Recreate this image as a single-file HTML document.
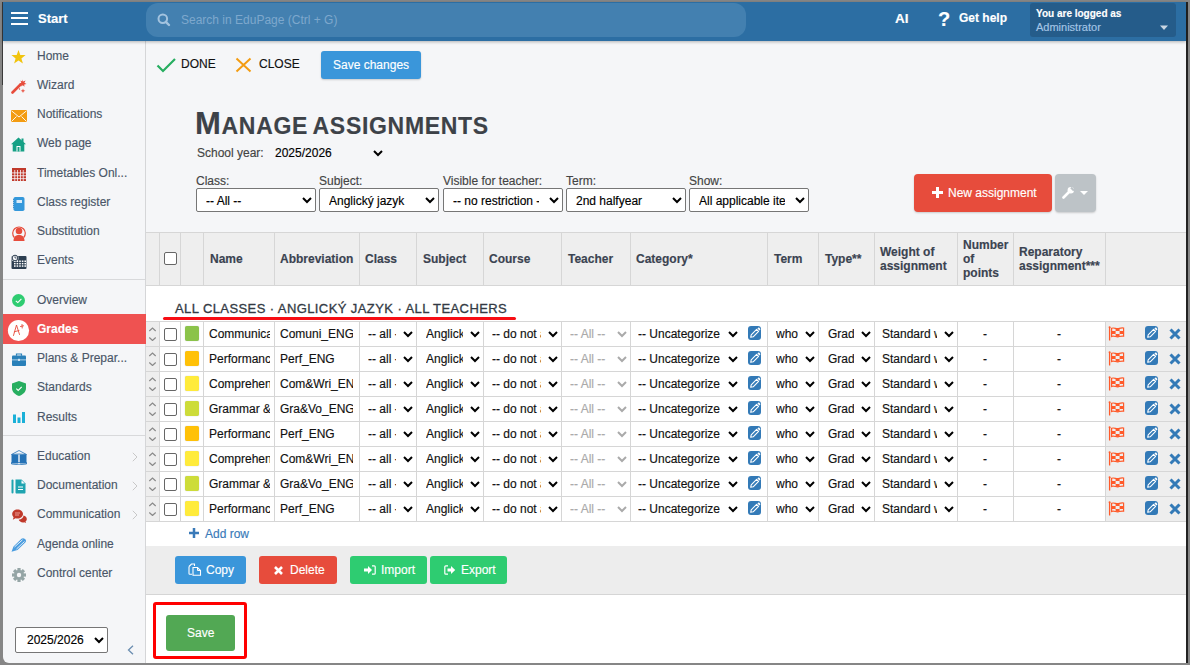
<!DOCTYPE html><html><head><meta charset="utf-8"><style>
*{box-sizing:border-box;margin:0;padding:0}
html,body{width:1190px;height:665px;overflow:hidden;background:#868686;font-family:"Liberation Sans",sans-serif;position:relative}
.a{position:absolute}
.t{position:absolute;white-space:nowrap;line-height:1;-webkit-text-stroke:0.15px currentColor}
.mi{font-size:12px;color:#4a5668;left:37px}
.hd{font-size:12px;font-weight:bold;color:#3b4351}
.c{font-size:12px;color:#111}
.clip{overflow:hidden;height:16px}
.vl{position:absolute;width:1px;background:#d6d6d6}
.hl{position:absolute;height:1px;background:#d6d6d6}
.btn{position:absolute;border-radius:3px;box-shadow:0 1px 2px rgba(0,0,0,.18)}
</style></head><body>
<div class="a" style="left:2px;top:2px;width:1px;height:83px;background:#3a3a3a"></div>
<div class="a" style="left:1186px;top:2px;width:2px;height:661px;background:#222"></div>
<div class="a" style="left:3px;top:2px;width:1183px;height:661px;background:#f5f6f8;border-bottom-left-radius:6px"></div>
<div class="a" style="left:3px;top:2px;width:1183px;height:39px;background:#2c6ea3;box-shadow:0 1px 3px rgba(0,0,0,.28);z-index:2"></div>
<div style="position:absolute;left:0;top:0;z-index:3">
<div class="a" style="left:11px;top:12px;width:17px;height:2px;background:#fff"></div>
<div class="a" style="left:11px;top:17px;width:17px;height:2px;background:#fff"></div>
<div class="a" style="left:11px;top:23px;width:17px;height:2px;background:#fff"></div>
<div class="t" style="left:38px;top:12px;font-size:13px;font-weight:bold;color:#fff">Start</div>
<div class="a" style="left:146px;top:3px;width:600px;height:34px;border-radius:12px;background:#4380b0"></div>
<svg class="a" style="left:157px;top:13px" width="14" height="14" viewBox="0 0 14 14"><circle cx="5.8" cy="5.8" r="4.3" fill="none" stroke="#a3c3df" stroke-width="2"/><line x1="8.8" y1="8.8" x2="12" y2="12" stroke="#a3c3df" stroke-width="2.4" stroke-linecap="round"/></svg>
<div class="t" style="left:181px;top:14px;font-size:12px;color:#7ea8cd;-webkit-text-stroke:0">Search in EduPage (Ctrl + G)</div>
<div class="t" style="left:895px;top:12px;font-size:13.5px;font-weight:bold;color:#fff">AI</div>
<div class="t" style="left:938px;top:8.5px;font-size:20px;font-weight:bold;color:#fff">?</div>
<div class="t" style="left:959px;top:12px;font-size:12px;font-weight:bold;color:#fff">Get help</div>
<div class="a" style="left:1030px;top:3px;width:146px;height:34px;border-radius:3px;background:#255c8a"></div>
<div class="t" style="left:1036px;top:9px;font-size:10px;font-weight:bold;color:#fff">You are logged as</div>
<div class="t" style="left:1036px;top:22px;font-size:11px;color:#a6c6e6">Administrator</div>
<svg class="a" style="left:1160px;top:25px" width="9" height="6"><path d="M0 0.5H8L4 5Z" fill="#c9d6e2"/></svg>
</div>
<div class="a" style="left:145px;top:41px;width:1px;height:622px;background:#d5d6d8"></div>
<div class="a" style="left:3px;top:279px;width:142px;height:1px;background:#d8d9db"></div>
<div class="a" style="left:3px;top:435px;width:142px;height:1px;background:#d8d9db"></div>
<div class="a" style="left:3px;top:314px;width:143px;height:30px;background:#ef5251"></div>
<div class="t mi" style="top:50px;">Home</div>
<div class="t mi" style="top:79px;">Wizard</div>
<div class="t mi" style="top:108px;">Notifications</div>
<div class="t mi" style="top:137px;">Web page</div>
<div class="t mi" style="top:167px;">Timetables Onl...</div>
<div class="t mi" style="top:196px;">Class register</div>
<div class="t mi" style="top:225px;">Substitution</div>
<div class="t mi" style="top:254px;">Events</div>
<div class="t mi" style="top:294px;">Overview</div>
<div class="t mi" style="top:323px;color:#fff;font-weight:bold">Grades</div>
<div class="t mi" style="top:352px;">Plans &amp; Prepar...</div>
<div class="t mi" style="top:381px;">Standards</div>
<div class="t mi" style="top:411px;">Results</div>
<div class="t mi" style="top:450px;">Education</div>
<div class="t mi" style="top:479px;">Documentation</div>
<div class="t mi" style="top:508px;">Communication</div>
<div class="t mi" style="top:538px;">Agenda online</div>
<div class="t mi" style="top:567px;">Control center</div>
<svg class="a" style="left:11px;top:50px" width="15" height="14" viewBox="0 0 15 14"><path d="M7.5 0L9.3 4.9L14.6 5.1L10.4 8.4L11.9 13.6L7.5 10.6L3.1 13.6L4.6 8.4L0.4 5.1L5.7 4.9Z" fill="#f1c40f"/></svg>
<svg class="a" style="left:11px;top:79px" width="16" height="15" viewBox="0 0 16 15"><path d="M1.5 13.5L9.5 5.5" stroke="#e74c3c" stroke-width="2.6" stroke-linecap="round"/><path d="M11.5 0.5L12.2 2.6L14.6 1.6L13.4 3.8L15.5 5L13.2 5.4L13.5 7.8L11.8 6.2L10.2 7.6L10.4 5.3L8.2 4.8L10.3 3.7L9.4 1.5L11.3 2.4Z" fill="#e74c3c"/><path d="M12 9.5L12.6 11.2L14.3 11.8L12.6 12.4L12 14L11.4 12.4L9.7 11.8L11.4 11.2Z" fill="#e74c3c"/><circle cx="8.5" cy="10" r="0.7" fill="#e74c3c"/></svg>
<svg class="a" style="left:11px;top:110px" width="16" height="12" viewBox="0 0 16 12"><rect x="0" y="0" width="16" height="12" fill="#f39c12"/><path d="M0.5 0.8L8 7L15.5 0.8M0.5 11.5L5.5 6.5M15.5 11.5L10.5 6.5" stroke="#fff" stroke-width="0.9" fill="none"/></svg>
<svg class="a" style="left:11px;top:137px" width="15" height="15" viewBox="0 0 15 15"><path d="M7.5 0.5L15 7.2H13.3V14.5H1.7V7.2H0Z" fill="#16a085"/><rect x="10.5" y="1.5" width="2" height="4" fill="#16a085"/><rect x="5.5" y="9" width="4" height="5.5" fill="#fff"/><rect x="6.5" y="10" width="2" height="4.5" fill="#16a085"/></svg>
<svg class="a" style="left:11.5px;top:168px" width="14" height="13" viewBox="0 0 14 13"><rect x="0" y="0" width="14" height="13" fill="#c0392b"/><rect x="2.4" y="2" width="0.8" height="11" fill="#f5f6f8"/><rect x="5.199999999999999" y="2" width="0.8" height="11" fill="#f5f6f8"/><rect x="7.999999999999998" y="2" width="0.8" height="11" fill="#f5f6f8"/><rect x="10.799999999999999" y="2" width="0.8" height="11" fill="#f5f6f8"/><rect x="0" y="4.5" width="14" height="0.8" fill="#f5f6f8"/><rect x="0" y="7.4" width="14" height="0.8" fill="#f5f6f8"/><rect x="0" y="10.299999999999999" width="14" height="0.8" fill="#f5f6f8"/></svg>
<svg class="a" style="left:13px;top:197px" width="12" height="14" viewBox="0 0 12 14"><rect x="0.5" y="0" width="11" height="14" rx="1.8" fill="#3498db"/><rect x="3.5" y="3" width="5.5" height="3" fill="#d8ecfa"/><path d="M0.5 2V12" stroke="#2a7fc0" stroke-width="0.8" stroke-dasharray="1 1"/></svg>
<svg class="a" style="left:11px;top:225px" width="16" height="16" viewBox="0 0 16 16"><path d="M3.3 12.5A6.3 6.3 0 1 1 12.7 12.5" fill="none" stroke="#e74c3c" stroke-width="1.2"/><circle cx="8" cy="6" r="3.3" fill="#e74c3c"/><path d="M2.5 16C2.5 11.5 5 10 8 10C11 10 13.5 11.5 13.5 16Z" fill="#e74c3c"/></svg>
<svg class="a" style="left:11px;top:254px" width="16" height="15" viewBox="0 0 16 15"><rect x="0.5" y="2" width="15" height="13" rx="1" fill="#2c3e50"/><g fill="#fff"><rect x="3.0" y="6.5" width="1.6" height="1.5"/><rect x="3.0" y="8.9" width="1.6" height="1.5"/><rect x="3.0" y="11.3" width="1.6" height="1.5"/><rect x="5.6" y="6.5" width="1.6" height="1.5"/><rect x="5.6" y="8.9" width="1.6" height="1.5"/><rect x="5.6" y="11.3" width="1.6" height="1.5"/><rect x="8.2" y="6.5" width="1.6" height="1.5"/><rect x="8.2" y="8.9" width="1.6" height="1.5"/><rect x="8.2" y="11.3" width="1.6" height="1.5"/><rect x="10.8" y="6.5" width="1.6" height="1.5"/><rect x="10.8" y="8.9" width="1.6" height="1.5"/><rect x="10.8" y="11.3" width="1.6" height="1.5"/><rect x="13.4" y="6.5" width="1.6" height="1.5"/><rect x="13.4" y="8.9" width="1.6" height="1.5"/><rect x="13.4" y="11.3" width="1.6" height="1.5"/></g><circle cx="4" cy="4" r="3.5" fill="#f5f6f8"/><circle cx="4" cy="4" r="2.8" fill="none" stroke="#2c3e50" stroke-width="1"/><path d="M4 2.3V4H5.5" stroke="#2c3e50" stroke-width="0.8" fill="none"/></svg>
<svg class="a" style="left:12px;top:294px" width="13" height="13" viewBox="0 0 13 13"><circle cx="6.5" cy="6.5" r="6.5" fill="#2ecc71"/><path d="M3.8 6.8L5.8 8.6L9.4 4.8" stroke="#fff" stroke-width="1.1" fill="none"/></svg>
<svg class="a" style="left:7px;top:319px" width="23" height="23" viewBox="0 0 23 23"><circle cx="11.5" cy="11.5" r="10.6" fill="#fff"/><path d="M6.5 16.5L9.5 6L12.5 15.5M7.3 12.8L12 11.5M13.5 7.5L16.5 6.8M15 5.5L15.2 9" stroke="#e74c3c" stroke-width="0.9" fill="none" stroke-linecap="round"/></svg>
<svg class="a" style="left:12px;top:353px" width="14" height="13" viewBox="0 0 14 13"><rect x="0" y="2.5" width="14" height="10.5" rx="1" fill="#2980b9"/><path d="M4.5 2.8V1H9.5V2.8" fill="none" stroke="#2980b9" stroke-width="1.2"/><rect x="0" y="6.5" width="14" height="0.8" fill="#cfe3f2"/><rect x="6" y="5.8" width="2" height="2.2" fill="#cfe3f2"/></svg>
<svg class="a" style="left:12px;top:381px" width="14" height="15" viewBox="0 0 14 15"><path d="M7 0L14 2.5V7C14 11 11 13.5 7 15C3 13.5 0 11 0 7V2.5Z" fill="#27ae60"/><path d="M4.3 7.6L6.2 9.4L9.7 5.8" stroke="#fff" stroke-width="1.1" fill="none"/></svg>
<svg class="a" style="left:13px;top:412px" width="12" height="11" viewBox="0 0 12 11"><rect x="0" y="2.5" width="3" height="8.5" fill="#1ab0d8"/><rect x="4.5" y="5.5" width="3" height="5.5" fill="#1ab0d8"/><rect x="9" y="0" width="3" height="11" fill="#1ab0d8"/></svg>
<svg class="a" style="left:11px;top:450px" width="16" height="15" viewBox="0 0 16 15"><path d="M8 0.5L15.5 4.5L8 4L0.5 4.5Z" fill="none" stroke="#2472b6" stroke-width="0.8"/><path d="M0.5 4.5H7.3V13.5H0.5Z M8.7 4.5H15.5V13.5H8.7Z" fill="#2472b6"/><path d="M0.5 12.5H15.5V14L8 14.8L0.5 14Z" fill="none" stroke="#2472b6" stroke-width="0.8"/></svg>
<svg class="a" style="left:11px;top:479px" width="15" height="15" viewBox="0 0 15 15"><rect x="0.5" y="0.5" width="2" height="14" rx="1" fill="#1fa4b0"/><path d="M4.5 0.5H10.5L14.5 4.5V13.5C14.5 14 14 14.5 13.5 14.5H5.5C5 14.5 4.5 14 4.5 13.5Z" fill="#1fa4b0"/><path d="M10.5 1.2V4.5H13.8" fill="#fff"/><path d="M7 8H12M7 10.5H12" stroke="#fff" stroke-width="1.1"/></svg>
<svg class="a" style="left:11.5px;top:509px" width="15" height="14" viewBox="0 0 15 14"><path d="M5.5 0.5C8.5 0.5 11 2.4 11 5C11 7.6 8.5 9.5 5.5 9.5C4.8 9.5 4.2 9.4 3.6 9.2L0.8 10.8L1.6 8.2C0.8 7.4 0.2 6.3 0.2 5C0.2 2.4 2.5 0.5 5.5 0.5Z" fill="#c0392b"/><path d="M11.5 6.5C13.5 7 14.8 8.3 14.8 10C14.8 11 14.3 11.9 13.5 12.5L14 14L12.2 13.2C11.8 13.3 11.4 13.4 11 13.4C8.8 13.4 7.2 12.3 6.7 10.8C9.5 10.3 11.5 8.6 11.5 6.5Z" fill="#c0392b"/><path d="M3 4H8M3 6H7" stroke="#f5b7b1" stroke-width="0.8"/></svg>
<svg class="a" style="left:11px;top:538px" width="16" height="14" viewBox="0 0 16 14"><path d="M0.5 13.8L2.5 8.5L10.5 0.8C11.3 0 12.8 0 14 1C15.2 2 15.3 3.5 14.5 4.3L6.5 12Z" fill="#4a9de0"/><path d="M3.5 9L11.5 1.8M5.5 11L13.5 3.5" stroke="#f5f6f8" stroke-width="0.9"/></svg>
<svg class="a" style="left:11.5px;top:567.5px" width="14" height="14" viewBox="0 0 14 14"><g transform="translate(7,7)" fill="#95a5a6"><rect x="-1.6" y="-7" width="3.2" height="4" transform="rotate(0)"/><rect x="-1.6" y="-7" width="3.2" height="4" transform="rotate(45)"/><rect x="-1.6" y="-7" width="3.2" height="4" transform="rotate(90)"/><rect x="-1.6" y="-7" width="3.2" height="4" transform="rotate(135)"/><rect x="-1.6" y="-7" width="3.2" height="4" transform="rotate(180)"/><rect x="-1.6" y="-7" width="3.2" height="4" transform="rotate(225)"/><rect x="-1.6" y="-7" width="3.2" height="4" transform="rotate(270)"/><rect x="-1.6" y="-7" width="3.2" height="4" transform="rotate(315)"/><circle r="5"/></g><circle cx="7" cy="7" r="2.2" fill="#f5f6f8"/></svg>
<svg class="a" style="left:132px;top:452px" width="6" height="10" viewBox="0 0 6 10"><path d="M0.8 0.8L5 5L0.8 9.2" stroke="#c8c8c8" stroke-width="1" fill="none"/></svg>
<svg class="a" style="left:132px;top:481px" width="6" height="10" viewBox="0 0 6 10"><path d="M0.8 0.8L5 5L0.8 9.2" stroke="#c8c8c8" stroke-width="1" fill="none"/></svg>
<svg class="a" style="left:132px;top:510px" width="6" height="10" viewBox="0 0 6 10"><path d="M0.8 0.8L5 5L0.8 9.2" stroke="#c8c8c8" stroke-width="1" fill="none"/></svg>
<svg class="a" style="left:127px;top:645px" width="7" height="10" viewBox="0 0 7 10"><path d="M6 0.8L1.5 5L6 9.2" stroke="#6a8db0" stroke-width="1.3" fill="none"/></svg>
<div class="a" style="left:15px;top:627px;width:93px;height:26px;border:1px solid #767676;border-radius:2px;background:#fff"></div>
<div class="t" style="left:27px;top:634px;font-size:12px;color:#000">2025/2026</div>
<svg class="a" style="left:94px;top:637px" width="10" height="7"><path d="M1 1L5.0 5L9 1" fill="none" stroke="#000" stroke-width="2"/></svg>
<svg class="a" style="left:156px;top:57px" width="20" height="16"><path d="M1.5 8.5L7 14L19 2" fill="none" stroke="#27ae60" stroke-width="2.2"/></svg>
<div class="t" style="left:181px;top:58px;font-size:12px;color:#111">DONE</div>
<svg class="a" style="left:235px;top:57px" width="17" height="16"><path d="M1.5 1.5L15.5 14.5M15.5 1.5L1.5 14.5" fill="none" stroke="#f39c12" stroke-width="2"/></svg>
<div class="t" style="left:259px;top:58px;font-size:12px;color:#111">CLOSE</div>
<div class="btn" style="left:321px;top:51px;width:100px;height:28px;background:#3a96da"></div>
<div class="t" style="left:333px;top:59px;font-size:12px;color:#fff">Save changes</div>
<div class="t" style="left:195px;top:108px;font-size:31px;font-weight:bold;color:#3d4248;letter-spacing:0.7px;word-spacing:-1.8px">M<span style="font-size:23px">ANAGE ASSIGNMENTS</span></div>
<div class="t" style="left:197px;top:147px;font-size:12px;color:#444">School year:</div>
<div class="t" style="left:275px;top:147px;font-size:12px;color:#000">2025/2026</div>
<svg class="a" style="left:373px;top:150px" width="10" height="7"><path d="M1 1L5.0 5L9 1" fill="none" stroke="#000" stroke-width="2"/></svg>
<div class="t" style="left:196px;top:175px;font-size:12px;color:#444">Class:</div>
<div class="a" style="left:196px;top:188px;width:120px;height:24px;border:1px solid #767676;border-radius:2px;background:#fff"></div>
<div class="t clip" style="left:206px;top:195px;width:86px;font-size:12px;color:#000">-- All --</div>
<svg class="a" style="left:302px;top:196.5px" width="10" height="7"><path d="M1 1L5.0 5L9 1" fill="none" stroke="#000" stroke-width="2"/></svg>
<div class="t" style="left:319px;top:175px;font-size:12px;color:#444">Subject:</div>
<div class="a" style="left:319px;top:188px;width:120px;height:24px;border:1px solid #767676;border-radius:2px;background:#fff"></div>
<div class="t clip" style="left:329px;top:195px;width:86px;font-size:12px;color:#000">Anglický jazyk</div>
<svg class="a" style="left:425px;top:196.5px" width="10" height="7"><path d="M1 1L5.0 5L9 1" fill="none" stroke="#000" stroke-width="2"/></svg>
<div class="t" style="left:443px;top:175px;font-size:12px;color:#444">Visible for teacher:</div>
<div class="a" style="left:443px;top:188px;width:120px;height:24px;border:1px solid #767676;border-radius:2px;background:#fff"></div>
<div class="t clip" style="left:453px;top:195px;width:86px;font-size:12px;color:#000">-- no restriction --</div>
<svg class="a" style="left:549px;top:196.5px" width="10" height="7"><path d="M1 1L5.0 5L9 1" fill="none" stroke="#000" stroke-width="2"/></svg>
<div class="t" style="left:566px;top:175px;font-size:12px;color:#444">Term:</div>
<div class="a" style="left:566px;top:188px;width:120px;height:24px;border:1px solid #767676;border-radius:2px;background:#fff"></div>
<div class="t clip" style="left:576px;top:195px;width:86px;font-size:12px;color:#000">2nd halfyear</div>
<svg class="a" style="left:672px;top:196.5px" width="10" height="7"><path d="M1 1L5.0 5L9 1" fill="none" stroke="#000" stroke-width="2"/></svg>
<div class="t" style="left:689px;top:175px;font-size:12px;color:#444">Show:</div>
<div class="a" style="left:689px;top:188px;width:120px;height:24px;border:1px solid #767676;border-radius:2px;background:#fff"></div>
<div class="t clip" style="left:699px;top:195px;width:86px;font-size:12px;color:#000">All applicable items</div>
<svg class="a" style="left:795px;top:196.5px" width="10" height="7"><path d="M1 1L5.0 5L9 1" fill="none" stroke="#000" stroke-width="2"/></svg>
<div class="btn" style="left:914px;top:174px;width:138px;height:38px;background:#e74c3c;border-radius:4px"></div>
<svg class="a" style="left:932px;top:187px" width="11" height="11"><path d="M5.5 0V11M0 5.5H11" stroke="#fff" stroke-width="3"/></svg>
<div class="t" style="left:948px;top:187px;font-size:12px;color:#fff">New assignment</div>
<div class="btn" style="left:1055px;top:174px;width:41px;height:38px;background:#bdc3c7;border-radius:4px"></div>
<svg class="a" style="left:1062px;top:186px" width="13" height="13" viewBox="0 0 13 13"><path d="M1.5 11.5L6.5 6.5" stroke="#fff" stroke-width="2.6" stroke-linecap="round"/><circle cx="8.8" cy="4.2" r="3.2" fill="#fff"/><path d="M9 1.5L12 4.5" stroke="#bdc3c7" stroke-width="2.2"/></svg>
<svg class="a" style="left:1080px;top:191px" width="9" height="5"><path d="M0 0H8L4 4Z" fill="#fff"/></svg>
<div class="a" style="left:146px;top:232px;width:1040px;height:54px;background:#eeeeee;border-top:1px solid #d6d6d6;border-bottom:1px solid #d6d6d6"></div>
<div class="a" style="left:146px;top:286px;width:1040px;height:260px;background:#fff"></div>
<div class="a" style="left:146px;top:321px;width:13px;height:200px;background:#eeeeee"></div>
<div class="a" style="left:1106px;top:321px;width:80px;height:200px;background:#eeeeee"></div>
<div class="vl" style="left:159px;top:232px;height:54px"></div>
<div class="vl" style="left:159px;top:321px;height:200px"></div>
<div class="vl" style="left:180px;top:232px;height:54px"></div>
<div class="vl" style="left:180px;top:321px;height:200px"></div>
<div class="vl" style="left:203px;top:232px;height:54px"></div>
<div class="vl" style="left:203px;top:321px;height:200px"></div>
<div class="vl" style="left:274px;top:232px;height:54px"></div>
<div class="vl" style="left:274px;top:321px;height:200px"></div>
<div class="vl" style="left:359px;top:232px;height:54px"></div>
<div class="vl" style="left:359px;top:321px;height:200px"></div>
<div class="vl" style="left:416px;top:232px;height:54px"></div>
<div class="vl" style="left:416px;top:321px;height:200px"></div>
<div class="vl" style="left:483px;top:232px;height:54px"></div>
<div class="vl" style="left:483px;top:321px;height:200px"></div>
<div class="vl" style="left:561px;top:232px;height:54px"></div>
<div class="vl" style="left:561px;top:321px;height:200px"></div>
<div class="vl" style="left:630px;top:232px;height:54px"></div>
<div class="vl" style="left:630px;top:321px;height:200px"></div>
<div class="vl" style="left:767px;top:232px;height:54px"></div>
<div class="vl" style="left:767px;top:321px;height:200px"></div>
<div class="vl" style="left:818px;top:232px;height:54px"></div>
<div class="vl" style="left:818px;top:321px;height:200px"></div>
<div class="vl" style="left:874px;top:232px;height:54px"></div>
<div class="vl" style="left:874px;top:321px;height:200px"></div>
<div class="vl" style="left:957px;top:232px;height:54px"></div>
<div class="vl" style="left:957px;top:321px;height:200px"></div>
<div class="vl" style="left:1013px;top:232px;height:54px"></div>
<div class="vl" style="left:1013px;top:321px;height:200px"></div>
<div class="vl" style="left:1105px;top:232px;height:54px"></div>
<div class="vl" style="left:1105px;top:321px;height:200px"></div>
<div class="hl" style="left:146px;top:321px;width:1040px"></div>
<div class="hl" style="left:146px;top:346px;width:1040px"></div>
<div class="hl" style="left:146px;top:371px;width:1040px"></div>
<div class="hl" style="left:146px;top:396px;width:1040px"></div>
<div class="hl" style="left:146px;top:421px;width:1040px"></div>
<div class="hl" style="left:146px;top:446px;width:1040px"></div>
<div class="hl" style="left:146px;top:471px;width:1040px"></div>
<div class="hl" style="left:146px;top:496px;width:1040px"></div>
<div class="hl" style="left:146px;top:521px;width:1040px"></div>
<div class="a" style="left:164px;top:252px;width:13px;height:13px;border:1.5px solid #666;border-radius:2px;background:#fff"></div>
<div class="t hd" style="left:210px;top:253px">Name</div>
<div class="t hd" style="left:280px;top:253px">Abbreviation</div>
<div class="t hd" style="left:365px;top:253px">Class</div>
<div class="t hd" style="left:423px;top:253px">Subject</div>
<div class="t hd" style="left:489px;top:253px">Course</div>
<div class="t hd" style="left:568px;top:253px">Teacher</div>
<div class="t hd" style="left:636px;top:253px">Category*</div>
<div class="t hd" style="left:774px;top:253px">Term</div>
<div class="t hd" style="left:825px;top:253px">Type**</div>
<div class="t hd" style="left:880px;top:245px;line-height:14px">Weight of<br>assignment</div>
<div class="t hd" style="left:963px;top:238px;line-height:14px">Number<br>of<br>points</div>
<div class="t hd" style="left:1019px;top:245px;line-height:14px">Reparatory<br>assignment***</div>
<div class="t" style="left:175px;top:302px;font-size:13px;color:#333a44;letter-spacing:0.41px;-webkit-text-stroke:0.3px #333a44">ALL CLASSES · ANGLICKÝ JAZYK · ALL TEACHERS</div>
<div class="a" style="left:163px;top:317px;width:353px;height:3px;border-radius:2px;background:#f70d14"></div>
<svg class="a" style="left:148px;top:327px" width="9" height="14"><path d="M1.3 4L4.5 1L7.7 4M1.3 10.5L4.5 13.5L7.7 10.5" fill="none" stroke="#8a8a8a" stroke-width="1.2"/></svg>
<div class="a" style="left:164px;top:328px;width:13px;height:13px;border:1.5px solid #666;border-radius:2px;background:#fff"></div>
<div class="a" style="left:185px;top:326px;width:14px;height:15px;border-radius:2px;background:#8bc34a;box-shadow:0 0 1px rgba(0,0,0,.3)"></div>
<div class="t c clip" style="left:209px;top:328px;width:61px">Communica</div>
<div class="t c clip" style="left:280px;top:328px;width:73px">Comuni_ENG</div>
<div class="t c clip" style="left:368px;top:328px;width:28px">-- all --</div>
<svg class="a" style="left:403px;top:331px" width="10" height="7"><path d="M1 1L5.0 5L9 1" fill="none" stroke="#000" stroke-width="2"/></svg>
<div class="t c clip" style="left:426px;top:328px;width:37px">Anglický</div>
<svg class="a" style="left:470px;top:331px" width="10" height="7"><path d="M1 1L5.0 5L9 1" fill="none" stroke="#000" stroke-width="2"/></svg>
<div class="t c clip" style="left:492px;top:328px;width:49px">-- do not assign --</div>
<svg class="a" style="left:548px;top:331px" width="10" height="7"><path d="M1 1L5.0 5L9 1" fill="none" stroke="#000" stroke-width="2"/></svg>
<div class="t c clip" style="left:570px;top:328px;width:44px;color:#aaa">-- All --</div>
<svg class="a" style="left:617px;top:331px" width="10" height="7"><path d="M1 1L5.0 5L9 1" fill="none" stroke="#aaa" stroke-width="2"/></svg>
<div class="t c clip" style="left:638px;top:328px;width:82px">-- Uncategorized --</div>
<svg class="a" style="left:728px;top:331px" width="10" height="7"><path d="M1 1L5.0 5L9 1" fill="none" stroke="#000" stroke-width="2"/></svg>
<div class="a" style="left:748px;top:326px;width:13px;height:14px;border-radius:3px;background:#337ab7"></div>
<svg class="a" style="left:748px;top:326px" width="14" height="14"><path d="M2.7 11.3L3.2 8.8L8.6 3.4L10.6 5.4L5.2 10.8Z" fill="none" stroke="#fff" stroke-width="1.1" stroke-linejoin="round"/><path d="M9.4 2.6L10.2 1.8C10.5 1.5 11 1.5 11.3 1.8L12.2 2.7C12.5 3 12.5 3.5 12.2 3.8L11.4 4.6Z" fill="#fff"/></svg>
<div class="t c clip" style="left:776px;top:328px;width:22px">whole year</div>
<svg class="a" style="left:805px;top:331px" width="10" height="7"><path d="M1 1L5.0 5L9 1" fill="none" stroke="#000" stroke-width="2"/></svg>
<div class="t c clip" style="left:828px;top:328px;width:26px">Grades</div>
<svg class="a" style="left:861px;top:331px" width="10" height="7"><path d="M1 1L5.0 5L9 1" fill="none" stroke="#000" stroke-width="2"/></svg>
<div class="t c clip" style="left:882px;top:328px;width:55px">Standard weight</div>
<svg class="a" style="left:944px;top:331px" width="10" height="7"><path d="M1 1L5.0 5L9 1" fill="none" stroke="#000" stroke-width="2"/></svg>
<div class="t c" style="left:983px;top:328px">-</div>
<div class="t c" style="left:1057px;top:328px">-</div>
<svg class="a" style="left:1108px;top:326px" width="17" height="15" viewBox="0 0 17 15"><path d="M1.6 1V14.5" stroke="#ff5a2a" stroke-width="1.3"/><circle cx="1.6" cy="1.2" r="1" fill="#ff5a2a"/><path d="M3.6 2.3C6 1.3 8 3 10 2.6C12 2.2 13.5 1.6 15.6 2V10.2C13.5 9.8 12 10.4 10 10.8C8 11.2 6 9.5 3.6 10.5Z" fill="none" stroke="#ff5a2a" stroke-width="1.2"/><path d="M7.6 2.3H11.6V5.1H7.6Z M3.6 5.1H7.6V7.9H3.6Z M11.6 5.1H15.6V7.9H11.6Z M7.6 7.9H11.6V10.7H7.6Z" fill="#ff5a2a"/></svg>
<div class="a" style="left:1145px;top:326px;width:13px;height:14px;border-radius:3px;background:#337ab7"></div>
<svg class="a" style="left:1145px;top:326px" width="14" height="14"><path d="M2.7 11.3L3.2 8.8L8.6 3.4L10.6 5.4L5.2 10.8Z" fill="none" stroke="#fff" stroke-width="1.1" stroke-linejoin="round"/><path d="M9.4 2.6L10.2 1.8C10.5 1.5 11 1.5 11.3 1.8L12.2 2.7C12.5 3 12.5 3.5 12.2 3.8L11.4 4.6Z" fill="#fff"/></svg>
<svg class="a" style="left:1169px;top:328px" width="12" height="12"><path d="M1.5 1.5L10.5 10.5M10.5 1.5L1.5 10.5" stroke="#337ab7" stroke-width="3"/></svg>
<svg class="a" style="left:148px;top:352px" width="9" height="14"><path d="M1.3 4L4.5 1L7.7 4M1.3 10.5L4.5 13.5L7.7 10.5" fill="none" stroke="#8a8a8a" stroke-width="1.2"/></svg>
<div class="a" style="left:164px;top:353px;width:13px;height:13px;border:1.5px solid #666;border-radius:2px;background:#fff"></div>
<div class="a" style="left:185px;top:351px;width:14px;height:15px;border-radius:2px;background:#ffc107;box-shadow:0 0 1px rgba(0,0,0,.3)"></div>
<div class="t c clip" style="left:209px;top:353px;width:61px">Performanc</div>
<div class="t c clip" style="left:280px;top:353px;width:73px">Perf_ENG</div>
<div class="t c clip" style="left:368px;top:353px;width:28px">-- all --</div>
<svg class="a" style="left:403px;top:356px" width="10" height="7"><path d="M1 1L5.0 5L9 1" fill="none" stroke="#000" stroke-width="2"/></svg>
<div class="t c clip" style="left:426px;top:353px;width:37px">Anglický</div>
<svg class="a" style="left:470px;top:356px" width="10" height="7"><path d="M1 1L5.0 5L9 1" fill="none" stroke="#000" stroke-width="2"/></svg>
<div class="t c clip" style="left:492px;top:353px;width:49px">-- do not assign --</div>
<svg class="a" style="left:548px;top:356px" width="10" height="7"><path d="M1 1L5.0 5L9 1" fill="none" stroke="#000" stroke-width="2"/></svg>
<div class="t c clip" style="left:570px;top:353px;width:44px;color:#aaa">-- All --</div>
<svg class="a" style="left:617px;top:356px" width="10" height="7"><path d="M1 1L5.0 5L9 1" fill="none" stroke="#aaa" stroke-width="2"/></svg>
<div class="t c clip" style="left:638px;top:353px;width:82px">-- Uncategorized --</div>
<svg class="a" style="left:728px;top:356px" width="10" height="7"><path d="M1 1L5.0 5L9 1" fill="none" stroke="#000" stroke-width="2"/></svg>
<div class="a" style="left:748px;top:351px;width:13px;height:14px;border-radius:3px;background:#337ab7"></div>
<svg class="a" style="left:748px;top:351px" width="14" height="14"><path d="M2.7 11.3L3.2 8.8L8.6 3.4L10.6 5.4L5.2 10.8Z" fill="none" stroke="#fff" stroke-width="1.1" stroke-linejoin="round"/><path d="M9.4 2.6L10.2 1.8C10.5 1.5 11 1.5 11.3 1.8L12.2 2.7C12.5 3 12.5 3.5 12.2 3.8L11.4 4.6Z" fill="#fff"/></svg>
<div class="t c clip" style="left:776px;top:353px;width:22px">whole year</div>
<svg class="a" style="left:805px;top:356px" width="10" height="7"><path d="M1 1L5.0 5L9 1" fill="none" stroke="#000" stroke-width="2"/></svg>
<div class="t c clip" style="left:828px;top:353px;width:26px">Grades</div>
<svg class="a" style="left:861px;top:356px" width="10" height="7"><path d="M1 1L5.0 5L9 1" fill="none" stroke="#000" stroke-width="2"/></svg>
<div class="t c clip" style="left:882px;top:353px;width:55px">Standard weight</div>
<svg class="a" style="left:944px;top:356px" width="10" height="7"><path d="M1 1L5.0 5L9 1" fill="none" stroke="#000" stroke-width="2"/></svg>
<div class="t c" style="left:983px;top:353px">-</div>
<div class="t c" style="left:1057px;top:353px">-</div>
<svg class="a" style="left:1108px;top:351px" width="17" height="15" viewBox="0 0 17 15"><path d="M1.6 1V14.5" stroke="#ff5a2a" stroke-width="1.3"/><circle cx="1.6" cy="1.2" r="1" fill="#ff5a2a"/><path d="M3.6 2.3C6 1.3 8 3 10 2.6C12 2.2 13.5 1.6 15.6 2V10.2C13.5 9.8 12 10.4 10 10.8C8 11.2 6 9.5 3.6 10.5Z" fill="none" stroke="#ff5a2a" stroke-width="1.2"/><path d="M7.6 2.3H11.6V5.1H7.6Z M3.6 5.1H7.6V7.9H3.6Z M11.6 5.1H15.6V7.9H11.6Z M7.6 7.9H11.6V10.7H7.6Z" fill="#ff5a2a"/></svg>
<div class="a" style="left:1145px;top:351px;width:13px;height:14px;border-radius:3px;background:#337ab7"></div>
<svg class="a" style="left:1145px;top:351px" width="14" height="14"><path d="M2.7 11.3L3.2 8.8L8.6 3.4L10.6 5.4L5.2 10.8Z" fill="none" stroke="#fff" stroke-width="1.1" stroke-linejoin="round"/><path d="M9.4 2.6L10.2 1.8C10.5 1.5 11 1.5 11.3 1.8L12.2 2.7C12.5 3 12.5 3.5 12.2 3.8L11.4 4.6Z" fill="#fff"/></svg>
<svg class="a" style="left:1169px;top:353px" width="12" height="12"><path d="M1.5 1.5L10.5 10.5M10.5 1.5L1.5 10.5" stroke="#337ab7" stroke-width="3"/></svg>
<svg class="a" style="left:148px;top:377px" width="9" height="14"><path d="M1.3 4L4.5 1L7.7 4M1.3 10.5L4.5 13.5L7.7 10.5" fill="none" stroke="#8a8a8a" stroke-width="1.2"/></svg>
<div class="a" style="left:164px;top:378px;width:13px;height:13px;border:1.5px solid #666;border-radius:2px;background:#fff"></div>
<div class="a" style="left:185px;top:376px;width:14px;height:15px;border-radius:2px;background:#ffeb3b;box-shadow:0 0 1px rgba(0,0,0,.3)"></div>
<div class="t c clip" style="left:209px;top:378px;width:61px">Comprehen</div>
<div class="t c clip" style="left:280px;top:378px;width:73px">Com&amp;Wri_EN</div>
<div class="t c clip" style="left:368px;top:378px;width:28px">-- all --</div>
<svg class="a" style="left:403px;top:381px" width="10" height="7"><path d="M1 1L5.0 5L9 1" fill="none" stroke="#000" stroke-width="2"/></svg>
<div class="t c clip" style="left:426px;top:378px;width:37px">Anglický</div>
<svg class="a" style="left:470px;top:381px" width="10" height="7"><path d="M1 1L5.0 5L9 1" fill="none" stroke="#000" stroke-width="2"/></svg>
<div class="t c clip" style="left:492px;top:378px;width:49px">-- do not assign --</div>
<svg class="a" style="left:548px;top:381px" width="10" height="7"><path d="M1 1L5.0 5L9 1" fill="none" stroke="#000" stroke-width="2"/></svg>
<div class="t c clip" style="left:570px;top:378px;width:44px;color:#aaa">-- All --</div>
<svg class="a" style="left:617px;top:381px" width="10" height="7"><path d="M1 1L5.0 5L9 1" fill="none" stroke="#aaa" stroke-width="2"/></svg>
<div class="t c clip" style="left:638px;top:378px;width:82px">-- Uncategorized --</div>
<svg class="a" style="left:728px;top:381px" width="10" height="7"><path d="M1 1L5.0 5L9 1" fill="none" stroke="#000" stroke-width="2"/></svg>
<div class="a" style="left:748px;top:376px;width:13px;height:14px;border-radius:3px;background:#337ab7"></div>
<svg class="a" style="left:748px;top:376px" width="14" height="14"><path d="M2.7 11.3L3.2 8.8L8.6 3.4L10.6 5.4L5.2 10.8Z" fill="none" stroke="#fff" stroke-width="1.1" stroke-linejoin="round"/><path d="M9.4 2.6L10.2 1.8C10.5 1.5 11 1.5 11.3 1.8L12.2 2.7C12.5 3 12.5 3.5 12.2 3.8L11.4 4.6Z" fill="#fff"/></svg>
<div class="t c clip" style="left:776px;top:378px;width:22px">whole year</div>
<svg class="a" style="left:805px;top:381px" width="10" height="7"><path d="M1 1L5.0 5L9 1" fill="none" stroke="#000" stroke-width="2"/></svg>
<div class="t c clip" style="left:828px;top:378px;width:26px">Grades</div>
<svg class="a" style="left:861px;top:381px" width="10" height="7"><path d="M1 1L5.0 5L9 1" fill="none" stroke="#000" stroke-width="2"/></svg>
<div class="t c clip" style="left:882px;top:378px;width:55px">Standard weight</div>
<svg class="a" style="left:944px;top:381px" width="10" height="7"><path d="M1 1L5.0 5L9 1" fill="none" stroke="#000" stroke-width="2"/></svg>
<div class="t c" style="left:983px;top:378px">-</div>
<div class="t c" style="left:1057px;top:378px">-</div>
<svg class="a" style="left:1108px;top:376px" width="17" height="15" viewBox="0 0 17 15"><path d="M1.6 1V14.5" stroke="#ff5a2a" stroke-width="1.3"/><circle cx="1.6" cy="1.2" r="1" fill="#ff5a2a"/><path d="M3.6 2.3C6 1.3 8 3 10 2.6C12 2.2 13.5 1.6 15.6 2V10.2C13.5 9.8 12 10.4 10 10.8C8 11.2 6 9.5 3.6 10.5Z" fill="none" stroke="#ff5a2a" stroke-width="1.2"/><path d="M7.6 2.3H11.6V5.1H7.6Z M3.6 5.1H7.6V7.9H3.6Z M11.6 5.1H15.6V7.9H11.6Z M7.6 7.9H11.6V10.7H7.6Z" fill="#ff5a2a"/></svg>
<div class="a" style="left:1145px;top:376px;width:13px;height:14px;border-radius:3px;background:#337ab7"></div>
<svg class="a" style="left:1145px;top:376px" width="14" height="14"><path d="M2.7 11.3L3.2 8.8L8.6 3.4L10.6 5.4L5.2 10.8Z" fill="none" stroke="#fff" stroke-width="1.1" stroke-linejoin="round"/><path d="M9.4 2.6L10.2 1.8C10.5 1.5 11 1.5 11.3 1.8L12.2 2.7C12.5 3 12.5 3.5 12.2 3.8L11.4 4.6Z" fill="#fff"/></svg>
<svg class="a" style="left:1169px;top:378px" width="12" height="12"><path d="M1.5 1.5L10.5 10.5M10.5 1.5L1.5 10.5" stroke="#337ab7" stroke-width="3"/></svg>
<svg class="a" style="left:148px;top:402px" width="9" height="14"><path d="M1.3 4L4.5 1L7.7 4M1.3 10.5L4.5 13.5L7.7 10.5" fill="none" stroke="#8a8a8a" stroke-width="1.2"/></svg>
<div class="a" style="left:164px;top:403px;width:13px;height:13px;border:1.5px solid #666;border-radius:2px;background:#fff"></div>
<div class="a" style="left:185px;top:401px;width:14px;height:15px;border-radius:2px;background:#cddc39;box-shadow:0 0 1px rgba(0,0,0,.3)"></div>
<div class="t c clip" style="left:209px;top:403px;width:61px">Grammar &amp;</div>
<div class="t c clip" style="left:280px;top:403px;width:73px">Gra&amp;Vo_ENG</div>
<div class="t c clip" style="left:368px;top:403px;width:28px">-- all --</div>
<svg class="a" style="left:403px;top:406px" width="10" height="7"><path d="M1 1L5.0 5L9 1" fill="none" stroke="#000" stroke-width="2"/></svg>
<div class="t c clip" style="left:426px;top:403px;width:37px">Anglický</div>
<svg class="a" style="left:470px;top:406px" width="10" height="7"><path d="M1 1L5.0 5L9 1" fill="none" stroke="#000" stroke-width="2"/></svg>
<div class="t c clip" style="left:492px;top:403px;width:49px">-- do not assign --</div>
<svg class="a" style="left:548px;top:406px" width="10" height="7"><path d="M1 1L5.0 5L9 1" fill="none" stroke="#000" stroke-width="2"/></svg>
<div class="t c clip" style="left:570px;top:403px;width:44px;color:#aaa">-- All --</div>
<svg class="a" style="left:617px;top:406px" width="10" height="7"><path d="M1 1L5.0 5L9 1" fill="none" stroke="#aaa" stroke-width="2"/></svg>
<div class="t c clip" style="left:638px;top:403px;width:82px">-- Uncategorized --</div>
<svg class="a" style="left:728px;top:406px" width="10" height="7"><path d="M1 1L5.0 5L9 1" fill="none" stroke="#000" stroke-width="2"/></svg>
<div class="a" style="left:748px;top:401px;width:13px;height:14px;border-radius:3px;background:#337ab7"></div>
<svg class="a" style="left:748px;top:401px" width="14" height="14"><path d="M2.7 11.3L3.2 8.8L8.6 3.4L10.6 5.4L5.2 10.8Z" fill="none" stroke="#fff" stroke-width="1.1" stroke-linejoin="round"/><path d="M9.4 2.6L10.2 1.8C10.5 1.5 11 1.5 11.3 1.8L12.2 2.7C12.5 3 12.5 3.5 12.2 3.8L11.4 4.6Z" fill="#fff"/></svg>
<div class="t c clip" style="left:776px;top:403px;width:22px">whole year</div>
<svg class="a" style="left:805px;top:406px" width="10" height="7"><path d="M1 1L5.0 5L9 1" fill="none" stroke="#000" stroke-width="2"/></svg>
<div class="t c clip" style="left:828px;top:403px;width:26px">Grades</div>
<svg class="a" style="left:861px;top:406px" width="10" height="7"><path d="M1 1L5.0 5L9 1" fill="none" stroke="#000" stroke-width="2"/></svg>
<div class="t c clip" style="left:882px;top:403px;width:55px">Standard weight</div>
<svg class="a" style="left:944px;top:406px" width="10" height="7"><path d="M1 1L5.0 5L9 1" fill="none" stroke="#000" stroke-width="2"/></svg>
<div class="t c" style="left:983px;top:403px">-</div>
<div class="t c" style="left:1057px;top:403px">-</div>
<svg class="a" style="left:1108px;top:401px" width="17" height="15" viewBox="0 0 17 15"><path d="M1.6 1V14.5" stroke="#ff5a2a" stroke-width="1.3"/><circle cx="1.6" cy="1.2" r="1" fill="#ff5a2a"/><path d="M3.6 2.3C6 1.3 8 3 10 2.6C12 2.2 13.5 1.6 15.6 2V10.2C13.5 9.8 12 10.4 10 10.8C8 11.2 6 9.5 3.6 10.5Z" fill="none" stroke="#ff5a2a" stroke-width="1.2"/><path d="M7.6 2.3H11.6V5.1H7.6Z M3.6 5.1H7.6V7.9H3.6Z M11.6 5.1H15.6V7.9H11.6Z M7.6 7.9H11.6V10.7H7.6Z" fill="#ff5a2a"/></svg>
<div class="a" style="left:1145px;top:401px;width:13px;height:14px;border-radius:3px;background:#337ab7"></div>
<svg class="a" style="left:1145px;top:401px" width="14" height="14"><path d="M2.7 11.3L3.2 8.8L8.6 3.4L10.6 5.4L5.2 10.8Z" fill="none" stroke="#fff" stroke-width="1.1" stroke-linejoin="round"/><path d="M9.4 2.6L10.2 1.8C10.5 1.5 11 1.5 11.3 1.8L12.2 2.7C12.5 3 12.5 3.5 12.2 3.8L11.4 4.6Z" fill="#fff"/></svg>
<svg class="a" style="left:1169px;top:403px" width="12" height="12"><path d="M1.5 1.5L10.5 10.5M10.5 1.5L1.5 10.5" stroke="#337ab7" stroke-width="3"/></svg>
<svg class="a" style="left:148px;top:427px" width="9" height="14"><path d="M1.3 4L4.5 1L7.7 4M1.3 10.5L4.5 13.5L7.7 10.5" fill="none" stroke="#8a8a8a" stroke-width="1.2"/></svg>
<div class="a" style="left:164px;top:428px;width:13px;height:13px;border:1.5px solid #666;border-radius:2px;background:#fff"></div>
<div class="a" style="left:185px;top:426px;width:14px;height:15px;border-radius:2px;background:#ffc107;box-shadow:0 0 1px rgba(0,0,0,.3)"></div>
<div class="t c clip" style="left:209px;top:428px;width:61px">Performanc</div>
<div class="t c clip" style="left:280px;top:428px;width:73px">Perf_ENG</div>
<div class="t c clip" style="left:368px;top:428px;width:28px">-- all --</div>
<svg class="a" style="left:403px;top:431px" width="10" height="7"><path d="M1 1L5.0 5L9 1" fill="none" stroke="#000" stroke-width="2"/></svg>
<div class="t c clip" style="left:426px;top:428px;width:37px">Anglický</div>
<svg class="a" style="left:470px;top:431px" width="10" height="7"><path d="M1 1L5.0 5L9 1" fill="none" stroke="#000" stroke-width="2"/></svg>
<div class="t c clip" style="left:492px;top:428px;width:49px">-- do not assign --</div>
<svg class="a" style="left:548px;top:431px" width="10" height="7"><path d="M1 1L5.0 5L9 1" fill="none" stroke="#000" stroke-width="2"/></svg>
<div class="t c clip" style="left:570px;top:428px;width:44px;color:#aaa">-- All --</div>
<svg class="a" style="left:617px;top:431px" width="10" height="7"><path d="M1 1L5.0 5L9 1" fill="none" stroke="#aaa" stroke-width="2"/></svg>
<div class="t c clip" style="left:638px;top:428px;width:82px">-- Uncategorized --</div>
<svg class="a" style="left:728px;top:431px" width="10" height="7"><path d="M1 1L5.0 5L9 1" fill="none" stroke="#000" stroke-width="2"/></svg>
<div class="a" style="left:748px;top:426px;width:13px;height:14px;border-radius:3px;background:#337ab7"></div>
<svg class="a" style="left:748px;top:426px" width="14" height="14"><path d="M2.7 11.3L3.2 8.8L8.6 3.4L10.6 5.4L5.2 10.8Z" fill="none" stroke="#fff" stroke-width="1.1" stroke-linejoin="round"/><path d="M9.4 2.6L10.2 1.8C10.5 1.5 11 1.5 11.3 1.8L12.2 2.7C12.5 3 12.5 3.5 12.2 3.8L11.4 4.6Z" fill="#fff"/></svg>
<div class="t c clip" style="left:776px;top:428px;width:22px">whole year</div>
<svg class="a" style="left:805px;top:431px" width="10" height="7"><path d="M1 1L5.0 5L9 1" fill="none" stroke="#000" stroke-width="2"/></svg>
<div class="t c clip" style="left:828px;top:428px;width:26px">Grades</div>
<svg class="a" style="left:861px;top:431px" width="10" height="7"><path d="M1 1L5.0 5L9 1" fill="none" stroke="#000" stroke-width="2"/></svg>
<div class="t c clip" style="left:882px;top:428px;width:55px">Standard weight</div>
<svg class="a" style="left:944px;top:431px" width="10" height="7"><path d="M1 1L5.0 5L9 1" fill="none" stroke="#000" stroke-width="2"/></svg>
<div class="t c" style="left:983px;top:428px">-</div>
<div class="t c" style="left:1057px;top:428px">-</div>
<svg class="a" style="left:1108px;top:426px" width="17" height="15" viewBox="0 0 17 15"><path d="M1.6 1V14.5" stroke="#ff5a2a" stroke-width="1.3"/><circle cx="1.6" cy="1.2" r="1" fill="#ff5a2a"/><path d="M3.6 2.3C6 1.3 8 3 10 2.6C12 2.2 13.5 1.6 15.6 2V10.2C13.5 9.8 12 10.4 10 10.8C8 11.2 6 9.5 3.6 10.5Z" fill="none" stroke="#ff5a2a" stroke-width="1.2"/><path d="M7.6 2.3H11.6V5.1H7.6Z M3.6 5.1H7.6V7.9H3.6Z M11.6 5.1H15.6V7.9H11.6Z M7.6 7.9H11.6V10.7H7.6Z" fill="#ff5a2a"/></svg>
<div class="a" style="left:1145px;top:426px;width:13px;height:14px;border-radius:3px;background:#337ab7"></div>
<svg class="a" style="left:1145px;top:426px" width="14" height="14"><path d="M2.7 11.3L3.2 8.8L8.6 3.4L10.6 5.4L5.2 10.8Z" fill="none" stroke="#fff" stroke-width="1.1" stroke-linejoin="round"/><path d="M9.4 2.6L10.2 1.8C10.5 1.5 11 1.5 11.3 1.8L12.2 2.7C12.5 3 12.5 3.5 12.2 3.8L11.4 4.6Z" fill="#fff"/></svg>
<svg class="a" style="left:1169px;top:428px" width="12" height="12"><path d="M1.5 1.5L10.5 10.5M10.5 1.5L1.5 10.5" stroke="#337ab7" stroke-width="3"/></svg>
<svg class="a" style="left:148px;top:452px" width="9" height="14"><path d="M1.3 4L4.5 1L7.7 4M1.3 10.5L4.5 13.5L7.7 10.5" fill="none" stroke="#8a8a8a" stroke-width="1.2"/></svg>
<div class="a" style="left:164px;top:453px;width:13px;height:13px;border:1.5px solid #666;border-radius:2px;background:#fff"></div>
<div class="a" style="left:185px;top:451px;width:14px;height:15px;border-radius:2px;background:#ffeb3b;box-shadow:0 0 1px rgba(0,0,0,.3)"></div>
<div class="t c clip" style="left:209px;top:453px;width:61px">Comprehen</div>
<div class="t c clip" style="left:280px;top:453px;width:73px">Com&amp;Wri_EN</div>
<div class="t c clip" style="left:368px;top:453px;width:28px">-- all --</div>
<svg class="a" style="left:403px;top:456px" width="10" height="7"><path d="M1 1L5.0 5L9 1" fill="none" stroke="#000" stroke-width="2"/></svg>
<div class="t c clip" style="left:426px;top:453px;width:37px">Anglický</div>
<svg class="a" style="left:470px;top:456px" width="10" height="7"><path d="M1 1L5.0 5L9 1" fill="none" stroke="#000" stroke-width="2"/></svg>
<div class="t c clip" style="left:492px;top:453px;width:49px">-- do not assign --</div>
<svg class="a" style="left:548px;top:456px" width="10" height="7"><path d="M1 1L5.0 5L9 1" fill="none" stroke="#000" stroke-width="2"/></svg>
<div class="t c clip" style="left:570px;top:453px;width:44px;color:#aaa">-- All --</div>
<svg class="a" style="left:617px;top:456px" width="10" height="7"><path d="M1 1L5.0 5L9 1" fill="none" stroke="#aaa" stroke-width="2"/></svg>
<div class="t c clip" style="left:638px;top:453px;width:82px">-- Uncategorized --</div>
<svg class="a" style="left:728px;top:456px" width="10" height="7"><path d="M1 1L5.0 5L9 1" fill="none" stroke="#000" stroke-width="2"/></svg>
<div class="a" style="left:748px;top:451px;width:13px;height:14px;border-radius:3px;background:#337ab7"></div>
<svg class="a" style="left:748px;top:451px" width="14" height="14"><path d="M2.7 11.3L3.2 8.8L8.6 3.4L10.6 5.4L5.2 10.8Z" fill="none" stroke="#fff" stroke-width="1.1" stroke-linejoin="round"/><path d="M9.4 2.6L10.2 1.8C10.5 1.5 11 1.5 11.3 1.8L12.2 2.7C12.5 3 12.5 3.5 12.2 3.8L11.4 4.6Z" fill="#fff"/></svg>
<div class="t c clip" style="left:776px;top:453px;width:22px">whole year</div>
<svg class="a" style="left:805px;top:456px" width="10" height="7"><path d="M1 1L5.0 5L9 1" fill="none" stroke="#000" stroke-width="2"/></svg>
<div class="t c clip" style="left:828px;top:453px;width:26px">Grades</div>
<svg class="a" style="left:861px;top:456px" width="10" height="7"><path d="M1 1L5.0 5L9 1" fill="none" stroke="#000" stroke-width="2"/></svg>
<div class="t c clip" style="left:882px;top:453px;width:55px">Standard weight</div>
<svg class="a" style="left:944px;top:456px" width="10" height="7"><path d="M1 1L5.0 5L9 1" fill="none" stroke="#000" stroke-width="2"/></svg>
<div class="t c" style="left:983px;top:453px">-</div>
<div class="t c" style="left:1057px;top:453px">-</div>
<svg class="a" style="left:1108px;top:451px" width="17" height="15" viewBox="0 0 17 15"><path d="M1.6 1V14.5" stroke="#ff5a2a" stroke-width="1.3"/><circle cx="1.6" cy="1.2" r="1" fill="#ff5a2a"/><path d="M3.6 2.3C6 1.3 8 3 10 2.6C12 2.2 13.5 1.6 15.6 2V10.2C13.5 9.8 12 10.4 10 10.8C8 11.2 6 9.5 3.6 10.5Z" fill="none" stroke="#ff5a2a" stroke-width="1.2"/><path d="M7.6 2.3H11.6V5.1H7.6Z M3.6 5.1H7.6V7.9H3.6Z M11.6 5.1H15.6V7.9H11.6Z M7.6 7.9H11.6V10.7H7.6Z" fill="#ff5a2a"/></svg>
<div class="a" style="left:1145px;top:451px;width:13px;height:14px;border-radius:3px;background:#337ab7"></div>
<svg class="a" style="left:1145px;top:451px" width="14" height="14"><path d="M2.7 11.3L3.2 8.8L8.6 3.4L10.6 5.4L5.2 10.8Z" fill="none" stroke="#fff" stroke-width="1.1" stroke-linejoin="round"/><path d="M9.4 2.6L10.2 1.8C10.5 1.5 11 1.5 11.3 1.8L12.2 2.7C12.5 3 12.5 3.5 12.2 3.8L11.4 4.6Z" fill="#fff"/></svg>
<svg class="a" style="left:1169px;top:453px" width="12" height="12"><path d="M1.5 1.5L10.5 10.5M10.5 1.5L1.5 10.5" stroke="#337ab7" stroke-width="3"/></svg>
<svg class="a" style="left:148px;top:477px" width="9" height="14"><path d="M1.3 4L4.5 1L7.7 4M1.3 10.5L4.5 13.5L7.7 10.5" fill="none" stroke="#8a8a8a" stroke-width="1.2"/></svg>
<div class="a" style="left:164px;top:478px;width:13px;height:13px;border:1.5px solid #666;border-radius:2px;background:#fff"></div>
<div class="a" style="left:185px;top:476px;width:14px;height:15px;border-radius:2px;background:#cddc39;box-shadow:0 0 1px rgba(0,0,0,.3)"></div>
<div class="t c clip" style="left:209px;top:478px;width:61px">Grammar &amp;</div>
<div class="t c clip" style="left:280px;top:478px;width:73px">Gra&amp;Vo_ENG</div>
<div class="t c clip" style="left:368px;top:478px;width:28px">-- all --</div>
<svg class="a" style="left:403px;top:481px" width="10" height="7"><path d="M1 1L5.0 5L9 1" fill="none" stroke="#000" stroke-width="2"/></svg>
<div class="t c clip" style="left:426px;top:478px;width:37px">Anglický</div>
<svg class="a" style="left:470px;top:481px" width="10" height="7"><path d="M1 1L5.0 5L9 1" fill="none" stroke="#000" stroke-width="2"/></svg>
<div class="t c clip" style="left:492px;top:478px;width:49px">-- do not assign --</div>
<svg class="a" style="left:548px;top:481px" width="10" height="7"><path d="M1 1L5.0 5L9 1" fill="none" stroke="#000" stroke-width="2"/></svg>
<div class="t c clip" style="left:570px;top:478px;width:44px;color:#aaa">-- All --</div>
<svg class="a" style="left:617px;top:481px" width="10" height="7"><path d="M1 1L5.0 5L9 1" fill="none" stroke="#aaa" stroke-width="2"/></svg>
<div class="t c clip" style="left:638px;top:478px;width:82px">-- Uncategorized --</div>
<svg class="a" style="left:728px;top:481px" width="10" height="7"><path d="M1 1L5.0 5L9 1" fill="none" stroke="#000" stroke-width="2"/></svg>
<div class="a" style="left:748px;top:476px;width:13px;height:14px;border-radius:3px;background:#337ab7"></div>
<svg class="a" style="left:748px;top:476px" width="14" height="14"><path d="M2.7 11.3L3.2 8.8L8.6 3.4L10.6 5.4L5.2 10.8Z" fill="none" stroke="#fff" stroke-width="1.1" stroke-linejoin="round"/><path d="M9.4 2.6L10.2 1.8C10.5 1.5 11 1.5 11.3 1.8L12.2 2.7C12.5 3 12.5 3.5 12.2 3.8L11.4 4.6Z" fill="#fff"/></svg>
<div class="t c clip" style="left:776px;top:478px;width:22px">whole year</div>
<svg class="a" style="left:805px;top:481px" width="10" height="7"><path d="M1 1L5.0 5L9 1" fill="none" stroke="#000" stroke-width="2"/></svg>
<div class="t c clip" style="left:828px;top:478px;width:26px">Grades</div>
<svg class="a" style="left:861px;top:481px" width="10" height="7"><path d="M1 1L5.0 5L9 1" fill="none" stroke="#000" stroke-width="2"/></svg>
<div class="t c clip" style="left:882px;top:478px;width:55px">Standard weight</div>
<svg class="a" style="left:944px;top:481px" width="10" height="7"><path d="M1 1L5.0 5L9 1" fill="none" stroke="#000" stroke-width="2"/></svg>
<div class="t c" style="left:983px;top:478px">-</div>
<div class="t c" style="left:1057px;top:478px">-</div>
<svg class="a" style="left:1108px;top:476px" width="17" height="15" viewBox="0 0 17 15"><path d="M1.6 1V14.5" stroke="#ff5a2a" stroke-width="1.3"/><circle cx="1.6" cy="1.2" r="1" fill="#ff5a2a"/><path d="M3.6 2.3C6 1.3 8 3 10 2.6C12 2.2 13.5 1.6 15.6 2V10.2C13.5 9.8 12 10.4 10 10.8C8 11.2 6 9.5 3.6 10.5Z" fill="none" stroke="#ff5a2a" stroke-width="1.2"/><path d="M7.6 2.3H11.6V5.1H7.6Z M3.6 5.1H7.6V7.9H3.6Z M11.6 5.1H15.6V7.9H11.6Z M7.6 7.9H11.6V10.7H7.6Z" fill="#ff5a2a"/></svg>
<div class="a" style="left:1145px;top:476px;width:13px;height:14px;border-radius:3px;background:#337ab7"></div>
<svg class="a" style="left:1145px;top:476px" width="14" height="14"><path d="M2.7 11.3L3.2 8.8L8.6 3.4L10.6 5.4L5.2 10.8Z" fill="none" stroke="#fff" stroke-width="1.1" stroke-linejoin="round"/><path d="M9.4 2.6L10.2 1.8C10.5 1.5 11 1.5 11.3 1.8L12.2 2.7C12.5 3 12.5 3.5 12.2 3.8L11.4 4.6Z" fill="#fff"/></svg>
<svg class="a" style="left:1169px;top:478px" width="12" height="12"><path d="M1.5 1.5L10.5 10.5M10.5 1.5L1.5 10.5" stroke="#337ab7" stroke-width="3"/></svg>
<svg class="a" style="left:148px;top:502px" width="9" height="14"><path d="M1.3 4L4.5 1L7.7 4M1.3 10.5L4.5 13.5L7.7 10.5" fill="none" stroke="#8a8a8a" stroke-width="1.2"/></svg>
<div class="a" style="left:164px;top:503px;width:13px;height:13px;border:1.5px solid #666;border-radius:2px;background:#fff"></div>
<div class="a" style="left:185px;top:501px;width:14px;height:15px;border-radius:2px;background:#ffeb3b;box-shadow:0 0 1px rgba(0,0,0,.3)"></div>
<div class="t c clip" style="left:209px;top:503px;width:61px">Performanc</div>
<div class="t c clip" style="left:280px;top:503px;width:73px">Perf_ENG</div>
<div class="t c clip" style="left:368px;top:503px;width:28px">-- all --</div>
<svg class="a" style="left:403px;top:506px" width="10" height="7"><path d="M1 1L5.0 5L9 1" fill="none" stroke="#000" stroke-width="2"/></svg>
<div class="t c clip" style="left:426px;top:503px;width:37px">Anglický</div>
<svg class="a" style="left:470px;top:506px" width="10" height="7"><path d="M1 1L5.0 5L9 1" fill="none" stroke="#000" stroke-width="2"/></svg>
<div class="t c clip" style="left:492px;top:503px;width:49px">-- do not assign --</div>
<svg class="a" style="left:548px;top:506px" width="10" height="7"><path d="M1 1L5.0 5L9 1" fill="none" stroke="#000" stroke-width="2"/></svg>
<div class="t c clip" style="left:570px;top:503px;width:44px;color:#aaa">-- All --</div>
<svg class="a" style="left:617px;top:506px" width="10" height="7"><path d="M1 1L5.0 5L9 1" fill="none" stroke="#aaa" stroke-width="2"/></svg>
<div class="t c clip" style="left:638px;top:503px;width:82px">-- Uncategorized --</div>
<svg class="a" style="left:728px;top:506px" width="10" height="7"><path d="M1 1L5.0 5L9 1" fill="none" stroke="#000" stroke-width="2"/></svg>
<div class="a" style="left:748px;top:501px;width:13px;height:14px;border-radius:3px;background:#337ab7"></div>
<svg class="a" style="left:748px;top:501px" width="14" height="14"><path d="M2.7 11.3L3.2 8.8L8.6 3.4L10.6 5.4L5.2 10.8Z" fill="none" stroke="#fff" stroke-width="1.1" stroke-linejoin="round"/><path d="M9.4 2.6L10.2 1.8C10.5 1.5 11 1.5 11.3 1.8L12.2 2.7C12.5 3 12.5 3.5 12.2 3.8L11.4 4.6Z" fill="#fff"/></svg>
<div class="t c clip" style="left:776px;top:503px;width:22px">whole year</div>
<svg class="a" style="left:805px;top:506px" width="10" height="7"><path d="M1 1L5.0 5L9 1" fill="none" stroke="#000" stroke-width="2"/></svg>
<div class="t c clip" style="left:828px;top:503px;width:26px">Grades</div>
<svg class="a" style="left:861px;top:506px" width="10" height="7"><path d="M1 1L5.0 5L9 1" fill="none" stroke="#000" stroke-width="2"/></svg>
<div class="t c clip" style="left:882px;top:503px;width:55px">Standard weight</div>
<svg class="a" style="left:944px;top:506px" width="10" height="7"><path d="M1 1L5.0 5L9 1" fill="none" stroke="#000" stroke-width="2"/></svg>
<div class="t c" style="left:983px;top:503px">-</div>
<div class="t c" style="left:1057px;top:503px">-</div>
<svg class="a" style="left:1108px;top:501px" width="17" height="15" viewBox="0 0 17 15"><path d="M1.6 1V14.5" stroke="#ff5a2a" stroke-width="1.3"/><circle cx="1.6" cy="1.2" r="1" fill="#ff5a2a"/><path d="M3.6 2.3C6 1.3 8 3 10 2.6C12 2.2 13.5 1.6 15.6 2V10.2C13.5 9.8 12 10.4 10 10.8C8 11.2 6 9.5 3.6 10.5Z" fill="none" stroke="#ff5a2a" stroke-width="1.2"/><path d="M7.6 2.3H11.6V5.1H7.6Z M3.6 5.1H7.6V7.9H3.6Z M11.6 5.1H15.6V7.9H11.6Z M7.6 7.9H11.6V10.7H7.6Z" fill="#ff5a2a"/></svg>
<div class="a" style="left:1145px;top:501px;width:13px;height:14px;border-radius:3px;background:#337ab7"></div>
<svg class="a" style="left:1145px;top:501px" width="14" height="14"><path d="M2.7 11.3L3.2 8.8L8.6 3.4L10.6 5.4L5.2 10.8Z" fill="none" stroke="#fff" stroke-width="1.1" stroke-linejoin="round"/><path d="M9.4 2.6L10.2 1.8C10.5 1.5 11 1.5 11.3 1.8L12.2 2.7C12.5 3 12.5 3.5 12.2 3.8L11.4 4.6Z" fill="#fff"/></svg>
<svg class="a" style="left:1169px;top:503px" width="12" height="12"><path d="M1.5 1.5L10.5 10.5M10.5 1.5L1.5 10.5" stroke="#337ab7" stroke-width="3"/></svg>
<svg class="a" style="left:189px;top:528px" width="10" height="10"><path d="M5 0V10M0 5H10" stroke="#3a7ab8" stroke-width="2.5"/></svg>
<div class="t" style="left:205px;top:528px;font-size:12px;color:#3a7ab8">Add row</div>
<div class="a" style="left:146px;top:546px;width:1040px;height:49px;background:#ededed;border-bottom:1px solid #d5d5d5"></div>
<div class="btn" style="left:175px;top:556px;width:71px;height:28px;background:#3a96da;box-shadow:none"></div>
<div class="t" style="left:206px;top:564px;font-size:12px;color:#fff">Copy</div>
<div class="btn" style="left:259px;top:556px;width:78px;height:28px;background:#e74c3c;box-shadow:none"></div>
<div class="t" style="left:290px;top:564px;font-size:12px;color:#fff">Delete</div>
<div class="btn" style="left:350px;top:556px;width:77px;height:28px;background:#2ecc71;box-shadow:none"></div>
<div class="t" style="left:381px;top:564px;font-size:12px;color:#fff">Import</div>
<div class="btn" style="left:430px;top:556px;width:77px;height:28px;background:#2ecc71;box-shadow:none"></div>
<div class="t" style="left:461px;top:564px;font-size:12px;color:#fff">Export</div>
<svg class="a" style="left:188px;top:563px" width="14" height="13" viewBox="0 0 14 13"><path d="M1 3.5V10.5C1 11 1.3 11.3 1.8 11.3H4" fill="none" stroke="#fff" stroke-width="1.1"/><path d="M1 3.5L3.5 1H6.5V3" fill="none" stroke="#fff" stroke-width="1.1"/><path d="M5 4.5H9.5L12.5 7.5V12.3H5Z" fill="none" stroke="#fff" stroke-width="1.1"/><path d="M9.5 4.5V7.5H12.5" fill="none" stroke="#fff" stroke-width="1"/></svg>
<svg class="a" style="left:274px;top:566px" width="9" height="9" viewBox="0 0 9 9"><path d="M1 1L8 8M8 1L1 8" stroke="#fff" stroke-width="2.6"/></svg>
<svg class="a" style="left:364px;top:565px" width="12" height="10" viewBox="0 0 12 10"><path d="M0 3.5H4V1L8 5L4 9V6.5H0Z" fill="#fff"/><path d="M8 0.8H10.2C10.8 0.8 11.2 1.2 11.2 1.8V8.2C11.2 8.8 10.8 9.2 10.2 9.2H8" fill="none" stroke="#fff" stroke-width="1.2"/></svg>
<svg class="a" style="left:444px;top:565px" width="12" height="10" viewBox="0 0 12 10"><path d="M4 0.8H1.8C1.2 0.8 0.8 1.2 0.8 1.8V8.2C0.8 8.8 1.2 9.2 1.8 9.2H4" fill="none" stroke="#fff" stroke-width="1.2"/><path d="M3.5 3.5H7V1L11.2 5L7 9V6.5H3.5Z" fill="#fff"/></svg>
<div class="a" style="left:146px;top:595px;width:1040px;height:68px;background:#fff"></div>
<div class="a" style="left:153px;top:602px;width:94px;height:57px;border:3px solid #ff0000;border-radius:3px"></div>
<div class="btn" style="left:166px;top:615px;width:69px;height:36px;background:#52a854;box-shadow:none"></div>
<div class="t" style="left:187px;top:627px;font-size:12px;color:#fff">Save</div>
</body></html>
